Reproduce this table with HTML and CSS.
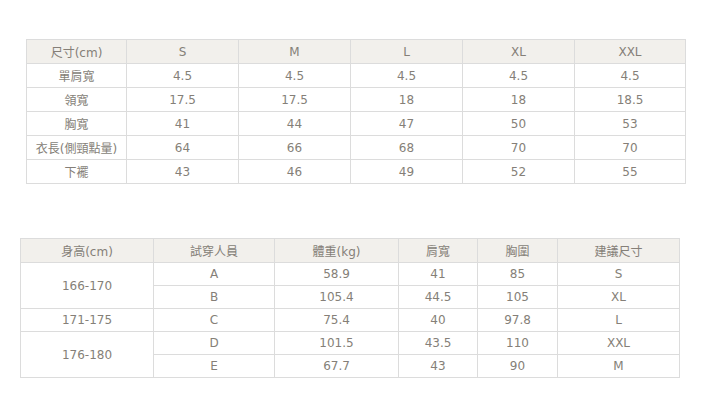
FILE: index.html
```html
<!DOCTYPE html>
<html lang="zh-Hant">
<head>
<meta charset="utf-8">
<link rel="stylesheet" href="styles.css">
</head>
<body>
<div class="page">
<table class="sz t1">
<colgroup><col class="c0"><col class="cs"><col class="cs"><col class="cs"><col class="cs"><col class="ce"></colgroup>
<tr class="hd"><td>尺寸(cm)</td><td>S</td><td>M</td><td>L</td><td>XL</td><td>XXL</td></tr>
<tr><td>單肩寬</td><td>4.5</td><td>4.5</td><td>4.5</td><td>4.5</td><td>4.5</td></tr>
<tr><td>領寬</td><td>17.5</td><td>17.5</td><td>18</td><td>18</td><td>18.5</td></tr>
<tr><td>胸寬</td><td>41</td><td>44</td><td>47</td><td>50</td><td>53</td></tr>
<tr><td>衣長(側頸點量)</td><td>64</td><td>66</td><td>68</td><td>70</td><td>70</td></tr>
<tr><td>下襬</td><td>43</td><td>46</td><td>49</td><td>52</td><td>55</td></tr>
</table>
<table class="sz t2">
<colgroup><col class="d0"><col class="d1"><col class="d2"><col class="d3"><col class="d4"><col class="d5"></colgroup>
<tr class="hd"><td>身高(cm)</td><td>試穿人員</td><td>體重(kg)</td><td>肩寬</td><td>胸圍</td><td>建議尺寸</td></tr>
<tr><td rowspan="2">166-170</td><td>A</td><td>58.9</td><td>41</td><td>85</td><td>S</td></tr>
<tr><td>B</td><td>105.4</td><td>44.5</td><td>105</td><td>XL</td></tr>
<tr><td>171-175</td><td>C</td><td>75.4</td><td>40</td><td>97.8</td><td>L</td></tr>
<tr><td rowspan="2">176-180</td><td>D</td><td>101.5</td><td>43.5</td><td>110</td><td>XXL</td></tr>
<tr><td>E</td><td>67.7</td><td>43</td><td>90</td><td>M</td></tr>
</table>
</div>
</body>
</html>
```
FILE: styles.css
```css
html, body {
  margin: 0;
  padding: 0;
  background: #ffffff;
}
.page {
  display: flex;
  flex-direction: column;
  align-items: flex-start;
  padding-top: 39px;
}
.sz {
  border-collapse: collapse;
  table-layout: fixed;
  font-family: "DejaVu Sans", "Noto Sans CJK TC", sans-serif;
  font-size: 12px;
  color: #857f78;
}
.sz td {
  border: 1px solid #dcdcdc;
  text-align: center;
  vertical-align: middle;
  padding: 0;
  white-space: nowrap;
  overflow: hidden;
}
.sz .hd td {
  background: #f2f0ec;
}
.t1 {
  margin-left: 26px;
  width: 659px;
}
.t1 tr {
  height: 24px;
}
.t1 .c0 { width: 100px; }
.t1 .cs { width: 112px; }
.t1 .ce { width: 111px; }
.t2 {
  margin-left: 20px;
  margin-top: 54px;
  width: 659px;
}
.t2 tr {
  height: 23px;
}
.t2 .hd {
  height: 24px;
}
.t2 .d0 { width: 133px; }
.t2 .d1 { width: 121px; }
.t2 .d2 { width: 124px; }
.t2 .d3 { width: 79px; }
.t2 .d4 { width: 80px; }
.t2 .d5 { width: 122px; }
```
